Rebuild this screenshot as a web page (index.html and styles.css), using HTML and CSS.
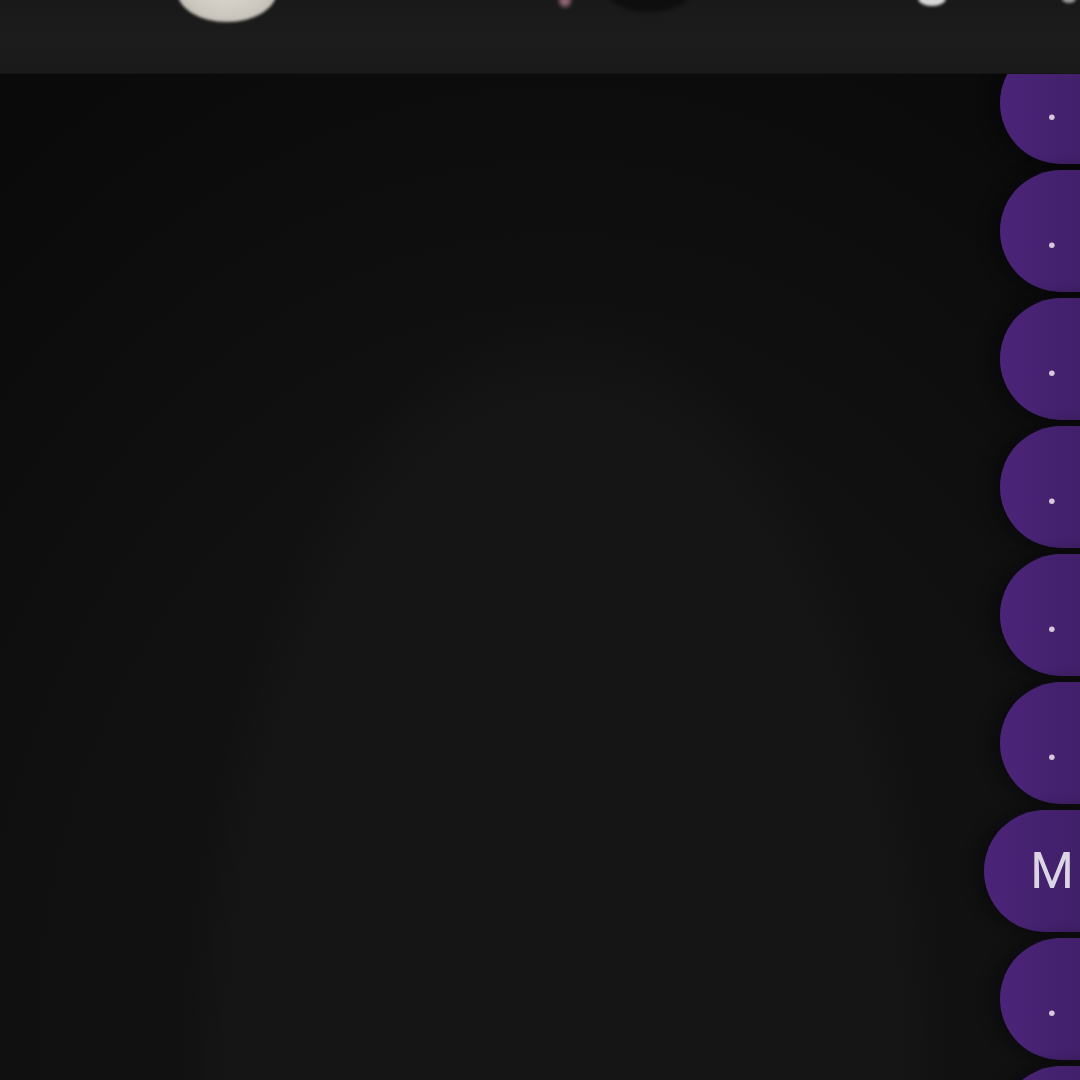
FILE: index.html
```html
<!DOCTYPE html>
<html lang="en">
<head>
<meta charset="utf-8">
<title>Chat</title>
<link rel="stylesheet" href="styles.css">
</head>
<body>
<div class="page">
  <header class="topbar">
    <span class="blob blob-white"></span>
    <span class="blob blob-pink"></span>
    <span class="blob blob-dark"></span>
    <span class="blob blob-light"></span>
    <span class="blob blob-tiny"></span>
  </header>
  <main class="content"></main>
  <nav class="rail">
    <button class="pill">.</button>
    <button class="pill">.</button>
    <button class="pill">.</button>
    <button class="pill">.</button>
    <button class="pill">.</button>
    <button class="pill">.</button>
    <button class="pill pill-wide">M</button>
    <button class="pill">.</button>
    <button class="pill">.</button>
  </nav>
</div>
</body>
</html>
```

FILE: styles.css
```css
html, body {
  margin: 0;
  padding: 0;
  width: 1080px;
  height: 1080px;
  overflow: hidden;
  background: #0f0f0f;
  font-family: Roboto, "Liberation Sans", sans-serif;
}

.page {
  position: relative;
  display: flex;
  width: 1080px;
  height: 1080px;
  overflow: hidden;
  background:
    radial-gradient(ellipse 380px 790px at 565px 1100px, #151515 0%, #151515 88%, rgba(21,21,21,0) 100%),
    radial-gradient(ellipse 900px 1150px at 560px 1050px, #131313 0%, #111111 55%, #0a0a0a 100%);
}

.topbar {
  position: absolute;
  top: 0;
  left: 0;
  right: 0;
  height: 73px;
  z-index: 2;
  overflow: hidden;
  background: linear-gradient(180deg, #191919 0%, #1c1c1c 55%, #1a1a1a 100%);
  box-shadow: 0 1px 0 #141414;
}

.blob {
  position: absolute;
  display: block;
  border-radius: 50%;
  filter: blur(1.5px);
}

.blob-white {
  left: 177px;
  top: -40px;
  width: 100px;
  height: 62px;
  background: radial-gradient(ellipse at 50% 40%, #e0dcd4 0%, #cbc6be 60%, #b2ada6 100%);
}

.blob-pink {
  left: 559px;
  top: -6px;
  width: 12px;
  height: 13px;
  background: #8c6472;
  filter: blur(2px);
}

.blob-dark {
  left: 604px;
  top: -40px;
  width: 90px;
  height: 52px;
  background: #0e0e0e;
  filter: blur(2px);
}

.blob-light {
  left: 918px;
  top: -10px;
  width: 28px;
  height: 16px;
  background: #d6d6d6;
  filter: blur(1.5px);
}

.blob-tiny {
  left: 1062px;
  top: -6px;
  width: 14px;
  height: 9px;
  background: #9a9a9a;
  filter: blur(1.5px);
}

.content {
  flex: 1;
}

.rail {
  width: 80px;
  flex: none;
  display: flex;
  flex-direction: column;
  align-items: flex-start;
  gap: 6px;
  padding-top: 42px;
}

.pill {
  flex: none;
  width: 150px;
  height: 122px;
  border: 0;
  border-radius: 61px;
  padding: 0 46px 0 0;
  background: linear-gradient(90deg, #4b2479 0%, #41206a 55%, #3a1b60 100%);
  color: #d2cadb;
  font-family: Roboto, "Liberation Sans", sans-serif;
  font-size: 50px;
  line-height: 1;
  display: flex;
  align-items: center;
  justify-content: center;
  box-shadow: -8px 0 16px rgba(4,2,10,0.45);
}

.pill-wide {
  width: 166px;
  margin-left: -16px;
  padding-right: 30px;
  color: #dcd6e4;
}
```
